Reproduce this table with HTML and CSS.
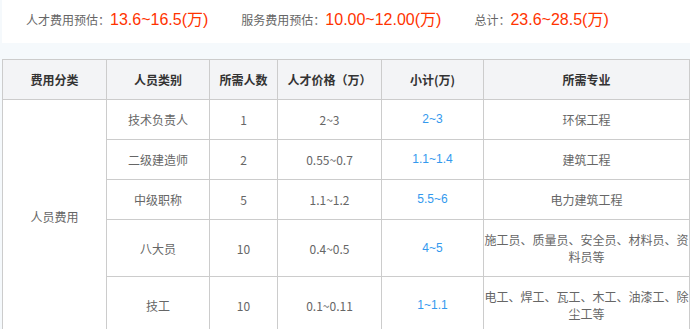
FILE: index.html
```html
<!DOCTYPE html>
<html lang="zh-CN">
<head>
<meta charset="utf-8">
<title>费用预估</title>
<link rel="stylesheet" href="styles.css">
</head>
<body>
<div class="summary">
  <div class="item"><span class="label">人才费用预估：</span><span class="value">13.6~16.5(万)</span></div>
  <div class="item"><span class="label">服务费用预估：</span><span class="value">10.00~12.00(万)</span></div>
  <div class="item"><span class="label">总计：</span><span class="value">23.6~28.5(万)</span></div>
</div>
<table class="cost">
  <colgroup>
    <col class="c1"><col class="c2"><col class="c3"><col class="c4"><col class="c5"><col class="c6">
  </colgroup>
  <thead>
    <tr><th>费用分类</th><th>人员类别</th><th>所需人数</th><th>人才价格（万）</th><th>小计(万)</th><th>所需专业</th></tr>
  </thead>
  <tbody>
    <tr><td rowspan="5">人员费用</td><td>技术负责人</td><td>1</td><td>2~3</td><td class="sub">2~3</td><td class="major">环保工程</td></tr>
    <tr><td>二级建造师</td><td>2</td><td>0.55~0.7</td><td class="sub">1.1~1.4</td><td class="major">建筑工程</td></tr>
    <tr><td>中级职称</td><td>5</td><td>1.1~1.2</td><td class="sub">5.5~6</td><td class="major">电力建筑工程</td></tr>
    <tr class="tall"><td>八大员</td><td>10</td><td>0.4~0.5</td><td class="sub">4~5</td><td class="major">施工员、质量员、安全员、材料员、资料员等</td></tr>
    <tr class="tall"><td>技工</td><td>10</td><td>0.1~0.11</td><td class="sub">1~1.1</td><td class="major">电工、焊工、瓦工、木工、油漆工、除尘工等</td></tr>
  </tbody>
</table>
</body>
</html>
```
FILE: styles.css
```css
html, body {
  margin: 0;
  padding: 0;
  background: #f5f9fc;
  font-family: "Noto Sans CJK SC", "Liberation Sans", sans-serif;
}
.summary {
  margin-left: 2px;
  height: 43px;
  box-sizing: border-box;
  padding: 9px 0 0 24px;
  background: #fff;
  display: flex;
  align-items: baseline;
}
.item {
  display: flex;
  align-items: baseline;
  margin-right: 33px;
}
.label {
  font-size: 12px;
  color: #666;
}
.value {
  font-size: 16px;
  color: #ff3300;
  font-family: "Liberation Sans", "Noto Sans CJK SC", sans-serif;
}
.value, .label { line-height: 22px; }
.cost {
  margin: 16px 0 0 2px;
  border-collapse: collapse;
  table-layout: fixed;
  width: 687px;
  font-size: 12px;
  color: #666;
  background: #fff;
}
.c1 { width: 104px; }
.c2 { width: 103px; }
.c3 { width: 68px; }
.c4 { width: 104px; }
.c5 { width: 102px; }
.c6 { width: 206px; }
.cost th, .cost td {
  border: 1px solid #cccccc;
  text-align: center;
  vertical-align: middle;
  padding: 0 4px;
  line-height: 17px;
}
.cost th {
  background: #f3f4f6;
  color: #333;
  font-weight: bold;
  height: 39px;
}
.cost td { height: 39px; }
.cost tr.tall td { height: 56px; }
.cost td.sub { color: #3399ee; font-family: "Liberation Sans", "Noto Sans CJK SC", sans-serif; }
.cost td.major { padding: 0; }
```
